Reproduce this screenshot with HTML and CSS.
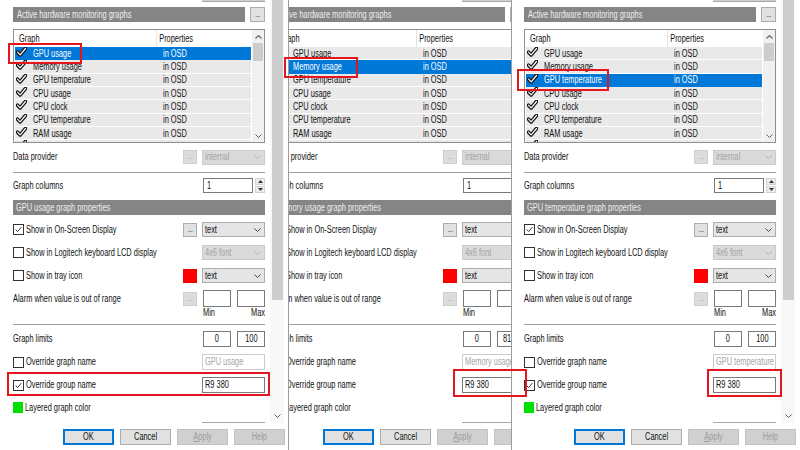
FILE: index.html
```html
<!DOCTYPE html>
<html>
<head>
<meta charset="utf-8">
<link rel="stylesheet" href="styles.css">
</head>
<body>
<svg class="defs" width="0" height="0">
  <symbol id="ck" viewBox="0 0 11 10"><path d="M1.5 5.2 L4.2 7.9 L9.5 1.5" fill="none" stroke="#111" stroke-width="3.6" stroke-linecap="round" stroke-linejoin="round"/><path d="M1.5 5.2 L4.2 7.9 L9.5 1.5" fill="none" stroke="#fff" stroke-width="1.2" stroke-linecap="round" stroke-linejoin="round"/></symbol>
  <symbol id="cbk" viewBox="0 0 11 11"><path d="M2 5.6 L4.4 8 L9 2.6" fill="none" stroke="#222" stroke-width="1.1"/></symbol>
  <symbol id="chev" viewBox="0 0 7 4"><path d="M0.5 0.5 L3.5 3.5 L6.5 0.5" fill="none" stroke="currentColor" stroke-width="1"/></symbol>
  <symbol id="chevup" viewBox="0 0 7 4"><path d="M0.5 3.5 L3.5 0.5 L6.5 3.5" fill="none" stroke="currentColor" stroke-width="1.1"/></symbol>
  <symbol id="triu" viewBox="0 0 5 3"><path d="M0 3 L2.5 0 L5 3 Z" fill="#333"/></symbol>
  <symbol id="trid" viewBox="0 0 5 3"><path d="M0 0 L2.5 3 L5 0 Z" fill="#333"/></symbol>
</svg>

<div class="stage">

  <!-- PANEL 1 -->
  <div class="clip clip1">
  <section class="panel">
    <div class="scroll">
      <div class="main">
        <div class="stub"><span class="stub-box"></span></div>
        <div class="hrow"><div class="bar top"><span class="t">Active hardware monitoring graphs</span></div><span class="dots">...</span></div>
        <div class="list">
          <div class="lbody">
            <div class="lhead"><span class="hc1"><span class="t">Graph</span></span><span class="hc2">Properties</span></div>
            <div class="lrow sel"><svg class="ck"><use href="#ck"/></svg><span class="c1">GPU usage</span><span class="c2">in OSD</span></div>
            <div class="lrow"><svg class="ck"><use href="#ck"/></svg><span class="c1">Memory usage</span><span class="c2">in OSD</span></div>
            <div class="lrow"><svg class="ck"><use href="#ck"/></svg><span class="c1">GPU temperature</span><span class="c2">in OSD</span></div>
            <div class="lrow"><svg class="ck"><use href="#ck"/></svg><span class="c1">CPU usage</span><span class="c2">in OSD</span></div>
            <div class="lrow"><svg class="ck"><use href="#ck"/></svg><span class="c1">CPU clock</span><span class="c2">in OSD</span></div>
            <div class="lrow"><svg class="ck"><use href="#ck"/></svg><span class="c1">CPU temperature</span><span class="c2">in OSD</span></div>
            <div class="lrow"><svg class="ck"><use href="#ck"/></svg><span class="c1">RAM usage</span><span class="c2">in OSD</span></div>
            <div class="lrow"><svg class="ck"><use href="#ck"/></svg></div>
          </div>
          <div class="lscroll"><svg class="sch"><use href="#chevup"/></svg><span class="lthumb"></span><span class="fill"></span><svg class="sch"><use href="#chev"/></svg></div>
        </div>
        <div class="frow r-prov"><span class="lbl">Data provider</span><span class="dots dis">...</span><span class="dd dis"><span class="ddt">internal</span><svg class="chev"><use href="#chev"/></svg></span></div>
        <div class="sep s1"></div>
        <div class="frow r-cols"><span class="lbl">Graph columns</span><span class="inp w50"><span class="t">1</span></span><span class="spin"><span class="sb"><svg class="tri"><use href="#triu"/></svg></span><span class="sb"><svg class="tri"><use href="#trid"/></svg></span></span></div>
        <div class="bar sec"><span class="t">GPU usage graph properties</span></div>
        <div class="frow r-osd"><span class="cb"><svg><use href="#cbk"/></svg></span><span class="lbl cbl">Show in On-Screen Display</span><span class="dots">...</span><span class="dd"><span class="ddt">text</span><svg class="chev"><use href="#chev"/></svg></span></div>
        <div class="frow r-lcd"><span class="cb"></span><span class="lbl cbl">Show in Logitech keyboard LCD display</span><span class="dd dis"><span class="ddt">4x6 font</span><svg class="chev"><use href="#chev"/></svg></span></div>
        <div class="frow r-tray"><span class="cb"></span><span class="lbl cbl">Show in tray icon</span><span class="swatch red"></span><span class="dd"><span class="ddt">text</span><svg class="chev"><use href="#chev"/></svg></span></div>
        <div class="frow r-alarm"><span class="lbl">Alarm when value is out of range</span><span class="dots dis">...</span><span class="inp w28 g6"></span><span class="inp w28 g6"></span></div>
        <div class="frow r-mm"><span class="lbl"></span><span class="mm">Min</span><span class="mm rt">Max</span></div>
        <div class="sep s2"></div>
        <div class="frow r-lim"><span class="lbl">Graph limits</span><span class="inp w28 ctr"><span class="tc">0</span></span><span class="inp w28 ctr g6"><span class="tc">100</span></span></div>
        <div class="frow r-ogn"><span class="cb"></span><span class="lbl cbl">Override graph name</span><span class="inp w63 dis"><span class="t">GPU usage</span></span></div>
        <div class="frow r-grp"><span class="cb"><svg><use href="#cbk"/></svg></span><span class="lbl cbl">Override group name</span><span class="inp w63"><span class="t">R9 380</span></span></div>
        <div class="frow r-lay"><span class="swatch green"></span><span class="lbl cbl">Layered graph color</span></div>
        <div class="frow r-next"><span class="lbl"></span><span class="inp w63 edge"></span></div>
      </div>
      <div class="vscroll"><span class="vthumb"></span><span class="fill"></span><svg class="sch"><use href="#chev"/></svg></div>
    </div>
    <div class="btnbar"><span class="btn def"><span class="tc">OK</span></span><span class="btn"><span class="tc">Cancel</span></span><span class="btn dis"><span class="tc"><u>A</u>pply</span></span><span class="btn dis"><span class="tc">Help</span></span></div>
  </section>
  </div>

  <!-- PANEL 2 -->
  <div class="clip clip2">
  <section class="panel">
    <div class="scroll">
      <div class="main">
        <div class="stub"><span class="stub-box"></span></div>
        <div class="hrow"><div class="bar top"><span class="t">Active hardware monitoring graphs</span></div><span class="dots">...</span></div>
        <div class="list">
          <div class="lbody">
            <div class="lhead"><span class="hc1"><span class="t">Graph</span></span><span class="hc2">Properties</span></div>
            <div class="lrow"><svg class="ck"><use href="#ck"/></svg><span class="c1">GPU usage</span><span class="c2">in OSD</span></div>
            <div class="lrow sel"><svg class="ck"><use href="#ck"/></svg><span class="c1">Memory usage</span><span class="c2">in OSD</span></div>
            <div class="lrow"><svg class="ck"><use href="#ck"/></svg><span class="c1">GPU temperature</span><span class="c2">in OSD</span></div>
            <div class="lrow"><svg class="ck"><use href="#ck"/></svg><span class="c1">CPU usage</span><span class="c2">in OSD</span></div>
            <div class="lrow"><svg class="ck"><use href="#ck"/></svg><span class="c1">CPU clock</span><span class="c2">in OSD</span></div>
            <div class="lrow"><svg class="ck"><use href="#ck"/></svg><span class="c1">CPU temperature</span><span class="c2">in OSD</span></div>
            <div class="lrow"><svg class="ck"><use href="#ck"/></svg><span class="c1">RAM usage</span><span class="c2">in OSD</span></div>
            <div class="lrow"><svg class="ck"><use href="#ck"/></svg></div>
          </div>
          <div class="lscroll"><svg class="sch"><use href="#chevup"/></svg><span class="lthumb"></span><span class="fill"></span><svg class="sch"><use href="#chev"/></svg></div>
        </div>
        <div class="frow r-prov"><span class="lbl">Data provider</span><span class="dots dis">...</span><span class="dd dis"><span class="ddt">internal</span><svg class="chev"><use href="#chev"/></svg></span></div>
        <div class="sep s1"></div>
        <div class="frow r-cols"><span class="lbl">Graph columns</span><span class="inp w50"><span class="t">1</span></span><span class="spin"><span class="sb"><svg class="tri"><use href="#triu"/></svg></span><span class="sb"><svg class="tri"><use href="#trid"/></svg></span></span></div>
        <div class="bar sec"><span class="t">Memory usage graph properties</span></div>
        <div class="frow r-osd"><span class="cb"><svg><use href="#cbk"/></svg></span><span class="lbl cbl">Show in On-Screen Display</span><span class="dots">...</span><span class="dd"><span class="ddt">text</span><svg class="chev"><use href="#chev"/></svg></span></div>
        <div class="frow r-lcd"><span class="cb"></span><span class="lbl cbl">Show in Logitech keyboard LCD display</span><span class="dd dis"><span class="ddt">4x6 font</span><svg class="chev"><use href="#chev"/></svg></span></div>
        <div class="frow r-tray"><span class="cb"></span><span class="lbl cbl">Show in tray icon</span><span class="swatch red"></span><span class="dd"><span class="ddt">text</span><svg class="chev"><use href="#chev"/></svg></span></div>
        <div class="frow r-alarm"><span class="lbl">Alarm when value is out of range</span><span class="dots dis">...</span><span class="inp w28 g6"></span><span class="inp w28 g6"></span></div>
        <div class="frow r-mm"><span class="lbl"></span><span class="mm">Min</span><span class="mm rt">Max</span></div>
        <div class="sep s2"></div>
        <div class="frow r-lim"><span class="lbl">Graph limits</span><span class="inp w28 ctr"><span class="tc">0</span></span><span class="inp w28 ctr g6"><span class="tc">8192</span></span></div>
        <div class="frow r-ogn"><span class="cb"></span><span class="lbl cbl">Override graph name</span><span class="inp w63 dis"><span class="t">Memory usage</span></span></div>
        <div class="frow r-grp"><span class="cb"><svg><use href="#cbk"/></svg></span><span class="lbl cbl">Override group name</span><span class="inp w63"><span class="t">R9 380</span></span></div>
        <div class="frow r-lay"><span class="swatch green"></span><span class="lbl cbl">Layered graph color</span></div>
        <div class="frow r-next"><span class="lbl"></span><span class="inp w63 edge"></span></div>
      </div>
      <div class="vscroll"><span class="vthumb"></span><span class="fill"></span><svg class="sch"><use href="#chev"/></svg></div>
    </div>
    <div class="btnbar"><span class="btn def"><span class="tc">OK</span></span><span class="btn"><span class="tc">Cancel</span></span><span class="btn dis"><span class="tc"><u>A</u>pply</span></span><span class="btn dis"><span class="tc">Help</span></span></div>
  </section>
  </div>

  <!-- PANEL 3 -->
  <div class="clip clip3">
  <section class="panel">
    <div class="scroll">
      <div class="main">
        <div class="stub"><span class="stub-box"></span></div>
        <div class="hrow"><div class="bar top"><span class="t">Active hardware monitoring graphs</span></div><span class="dots">...</span></div>
        <div class="list">
          <div class="lbody">
            <div class="lhead"><span class="hc1"><span class="t">Graph</span></span><span class="hc2">Properties</span></div>
            <div class="lrow"><svg class="ck"><use href="#ck"/></svg><span class="c1">GPU usage</span><span class="c2">in OSD</span></div>
            <div class="lrow"><svg class="ck"><use href="#ck"/></svg><span class="c1">Memory usage</span><span class="c2">in OSD</span></div>
            <div class="lrow sel"><svg class="ck"><use href="#ck"/></svg><span class="c1">GPU temperature</span><span class="c2">in OSD</span></div>
            <div class="lrow"><svg class="ck"><use href="#ck"/></svg><span class="c1">CPU usage</span><span class="c2">in OSD</span></div>
            <div class="lrow"><svg class="ck"><use href="#ck"/></svg><span class="c1">CPU clock</span><span class="c2">in OSD</span></div>
            <div class="lrow"><svg class="ck"><use href="#ck"/></svg><span class="c1">CPU temperature</span><span class="c2">in OSD</span></div>
            <div class="lrow"><svg class="ck"><use href="#ck"/></svg><span class="c1">RAM usage</span><span class="c2">in OSD</span></div>
            <div class="lrow"><svg class="ck"><use href="#ck"/></svg></div>
          </div>
          <div class="lscroll"><svg class="sch"><use href="#chevup"/></svg><span class="lthumb"></span><span class="fill"></span><svg class="sch"><use href="#chev"/></svg></div>
        </div>
        <div class="frow r-prov"><span class="lbl">Data provider</span><span class="dots dis">...</span><span class="dd dis"><span class="ddt">internal</span><svg class="chev"><use href="#chev"/></svg></span></div>
        <div class="sep s1"></div>
        <div class="frow r-cols"><span class="lbl">Graph columns</span><span class="inp w50"><span class="t">1</span></span><span class="spin"><span class="sb"><svg class="tri"><use href="#triu"/></svg></span><span class="sb"><svg class="tri"><use href="#trid"/></svg></span></span></div>
        <div class="bar sec"><span class="t">GPU temperature graph properties</span></div>
        <div class="frow r-osd"><span class="cb"><svg><use href="#cbk"/></svg></span><span class="lbl cbl">Show in On-Screen Display</span><span class="dots">...</span><span class="dd"><span class="ddt">text</span><svg class="chev"><use href="#chev"/></svg></span></div>
        <div class="frow r-lcd"><span class="cb"></span><span class="lbl cbl">Show in Logitech keyboard LCD display</span><span class="dd dis"><span class="ddt">4x6 font</span><svg class="chev"><use href="#chev"/></svg></span></div>
        <div class="frow r-tray"><span class="cb"></span><span class="lbl cbl">Show in tray icon</span><span class="swatch red"></span><span class="dd"><span class="ddt">text</span><svg class="chev"><use href="#chev"/></svg></span></div>
        <div class="frow r-alarm"><span class="lbl">Alarm when value is out of range</span><span class="dots dis">...</span><span class="inp w28 g6"></span><span class="inp w28 g6"></span></div>
        <div class="frow r-mm"><span class="lbl"></span><span class="mm">Min</span><span class="mm rt">Max</span></div>
        <div class="sep s2"></div>
        <div class="frow r-lim"><span class="lbl">Graph limits</span><span class="inp w28 ctr"><span class="tc">0</span></span><span class="inp w28 ctr g6"><span class="tc">100</span></span></div>
        <div class="frow r-ogn"><span class="cb"></span><span class="lbl cbl">Override graph name</span><span class="inp w63 dis"><span class="t">GPU temperature</span></span></div>
        <div class="frow r-grp"><span class="cb"><svg><use href="#cbk"/></svg></span><span class="lbl cbl">Override group name</span><span class="inp w63"><span class="t">R9 380</span></span></div>
        <div class="frow r-lay"><span class="swatch green"></span><span class="lbl cbl">Layered graph color</span></div>
        <div class="frow r-next"><span class="lbl"></span><span class="inp w63 edge"></span></div>
      </div>
      <div class="vscroll"><span class="vthumb"></span><span class="fill"></span><svg class="sch"><use href="#chev"/></svg></div>
    </div>
    <div class="btnbar"><span class="btn def"><span class="tc">OK</span></span><span class="btn"><span class="tc">Cancel</span></span><span class="btn dis"><span class="tc"><u>A</u>pply</span></span><span class="btn dis"><span class="tc">Help</span></span></div>
  </section>
  </div>

  <!-- annotation marks -->
  <div class="mark m1"></div>
  <div class="mark m2"></div>
  <div class="mark m3"></div>
  <div class="mark m4"></div>
  <div class="mark m5"></div>
  <div class="mark m6"></div>
</div>
</body>
</html>
```

FILE: styles.css
```css
* { box-sizing: border-box; }
html, body { margin: 0; padding: 0; }
body {
  width: 800px; height: 450px; overflow: hidden; background: #fff;
  font-family: "Liberation Sans", Arial, sans-serif;
  font-size: 10px; color: #111; line-height: 1;
}
.defs { position: absolute; width: 0; height: 0; overflow: hidden; }
.stage { position: relative; display: flex; width: 800px; height: 450px; }

/* narrow text rendering (source screenshot is horizontally condensed) */
.t, .tc, .lbl, .c1, .c2, .hc2, .ddt, .mm {
  display: inline-block; white-space: nowrap;
  transform: scaleX(0.74); transform-origin: 0 50%;
}
.tc { transform-origin: 50% 50%; }
.mm.rt { transform-origin: 100% 50%; }

.clip { height: 450px; overflow: hidden; flex: none; background: #fff; }
.clip1 { width: 288px; }
.clip2 { width: 223px; border-left: 1px solid #9c9c9c; }
.clip2 .panel { margin-left: -29px; }
.clip3 { width: 289px; border-left: 1px solid #9c9c9c; }
.clip3 .panel { margin-left: -1px; }

.panel { width: 289px; height: 450px; display: flex; flex-direction: column; background: #fff; }
.scroll { height: 423px; display: flex; overflow: hidden; flex: none; }
.main { width: 270px; flex: none; padding: 0 5px 0 13px; display: flex; flex-direction: column; }

/* top stub */
.stub { height: 2px; display: flex; justify-content: flex-end; flex: none; }
.stub-box { width: 63px; height: 2px; background: #cfcfcf; border-bottom: 1px solid #a8a8a8; }

/* header bars */
.hrow { display: flex; margin-top: 5px; height: 15px; flex: none; }
.bar { background: #858585; color: #eeeeee; display: flex; align-items: center; padding-left: 4px; height: 15px; flex: none; overflow: hidden; }
.bar.top { width: 232px; }
.bar.sec { width: 252px; margin-top: 7px; padding-left: 3px; }

.dots {
  width: 14px; height: 14px; flex: none; background: #e1e1e1; border: 1px solid #adadad;
  display: flex; align-items: flex-end; justify-content: center; font-size: 8px; color: #333;
  padding-bottom: 2px; letter-spacing: -0.5px;
}
.hrow .dots { margin-left: 5px; height: 15px; width: 15px; }
.dots.dis { background: #dcdcdc; border-color: #d0d0d0; color: #a8a8a8; }

/* list */
.list { margin-top: 7px; height: 114px; width: 252px; border: 1px solid #8e8f8f; display: flex; flex: none; background: #fff; }
.lbody { flex: 1; padding: 0 1px; overflow: hidden; }
.lhead { height: 17px; display: flex; align-items: center; }
.hc1 { width: 142px; padding-left: 4px; height: 17px; display: flex; align-items: center; border-right: 1px solid #e5e5e5; }
.hc2 { padding-left: 3px; }
.lrow { height: 13.333px; display: flex; align-items: center; background: #e9e9e9; box-shadow: inset 0 -1px 0 #ffffff; }
.lrow.sel { background: #0078d7; color: #fff; box-shadow: none; }
.ck { width: 11px; height: 10px; margin-left: 1px; margin-top: -3px; flex: none; }
.c1 { width: 130px; margin-left: 6px; }
.lscroll { width: 12px; flex: none; background: #f0f0f0; display: flex; flex-direction: column; align-items: center; padding: 5px 0 4px; }
.sch { width: 7px; height: 4px; color: #606060; flex: none; }
.lthumb { width: 10px; height: 18px; background: #cdcdcd; margin-top: 4px; }
.fill { flex: 1; }

/* form rows */
.frow { display: flex; align-items: center; flex: none; }
.lbl { flex: 1 1 0; min-width: 0; }
.cbl { margin-left: 2px; }
.r-prov { margin-top: 7px; height: 14px; }
.sep { height: 1px; background: #a0a0a0; flex: none; }
.s1 { margin-top: 8px; }
.s2 { margin-top: 5px; }
.r-cols { margin-top: 5px; height: 15px; }
.r-osd { margin-top: 7px; height: 15px; }
.r-lcd { margin-top: 8px; height: 15px; }
.r-tray { margin-top: 8px; height: 15px; }
.r-alarm { margin-top: 7px; height: 17px; }
.r-mm { height: 12px; }
.r-lim { margin-top: 6px; height: 16px; }
.r-ogn { margin-top: 7px; height: 16px; }
.r-grp { margin-top: 7px; height: 16px; }
.r-lay { margin-top: 9px; height: 11px; }
.r-next { margin-top: 9px; height: 10px; align-items: flex-start; }

.dd {
  width: 63px; height: 15px; margin-left: 5px; flex: none; background: #e5e5e5; border: 1px solid #adadad;
  display: flex; align-items: center; padding-left: 2px; color: #111;
}
.dd.dis { background: #dadada; border-color: #cacaca; color: #a3a3a3; }
.ddt { flex: 1 1 0; min-width: 0; }
.chev { width: 7px; height: 4px; margin-right: 3px; color: #444; flex: none; }
.dd.dis .chev { color: #b0b0b0; }

.inp { height: 100%; background: #fff; border: 1px solid #7a7a7a; flex: none; display: flex; align-items: center; padding-left: 3px; overflow: hidden; white-space: nowrap; }
.w50 { width: 50px; }
.w28 { width: 28px; }
.w63 { width: 63px; padding-left: 2px; }
.g6 { margin-left: 6px; }
.ctr { justify-content: center; padding-left: 0; }
.inp.dis { border-color: #cccccc; color: #a6a6a6; }
.inp.edge { height: 3px; border-bottom: none; border-color: #a8a8a8; }
.r-alarm .dots { margin-top: 1px; }

.spin { width: 10px; height: 15px; margin-left: 2px; display: flex; flex-direction: column; gap: 1px; flex: none; }
.sb { flex: 1; background: #ececec; border: 1px solid #d2d2d2; display: flex; align-items: center; justify-content: center; }
.tri { width: 5px; height: 3px; }

.cb { width: 11px; height: 11px; border: 1px solid #333; background: #fff; flex: none; display: flex; }
.cb svg { width: 9px; height: 9px; }
.swatch { flex: none; }
.swatch.red { width: 14px; height: 14px; background: #ff0000; }
.swatch.green { width: 10px; height: 11px; background: #00e000; }

.mm { width: 28px; flex: none; }
.mm.rt { margin-left: 6px; text-align: right; }

/* main vertical scrollbar */
.vscroll { width: 14px; flex: none; display: flex; flex-direction: column; align-items: center; background: #f8f8f8; padding-bottom: 5px; }
.vthumb { width: 11px; height: 300px; background: #cdcdcd; }

/* buttons */
.btnbar { height: 27px; display: flex; gap: 6px; padding: 6px 0 0 63px; flex: none; }
.btn {
  width: 51px; height: 16px; flex: none; background: #e1e1e1; border: 1px solid #adadad;
  display: flex; align-items: center; justify-content: center; color: #111;
}
.btn.def { border-color: #0078d7; box-shadow: inset 0 0 0 1px #0078d7; }
.btn.dis { background: #d0d0d0; border-color: #c2c2c2; color: #9c9c9c; }

/* red annotation boxes */
.mark { position: absolute; border: 2px solid #e3161d; }
.m1 { left: 8px; top: 43px; width: 74px; height: 21px; }
.m2 { left: 7px; top: 372px; width: 263px; height: 24px; }
.m3 { left: 284px; top: 57px; width: 74px; height: 21px; }
.m4 { left: 453px; top: 369px; width: 74px; height: 28px; }
.m5 { left: 517px; top: 69px; width: 92px; height: 22px; }
.m6 { left: 707px; top: 369px; width: 75px; height: 28px; }
```
